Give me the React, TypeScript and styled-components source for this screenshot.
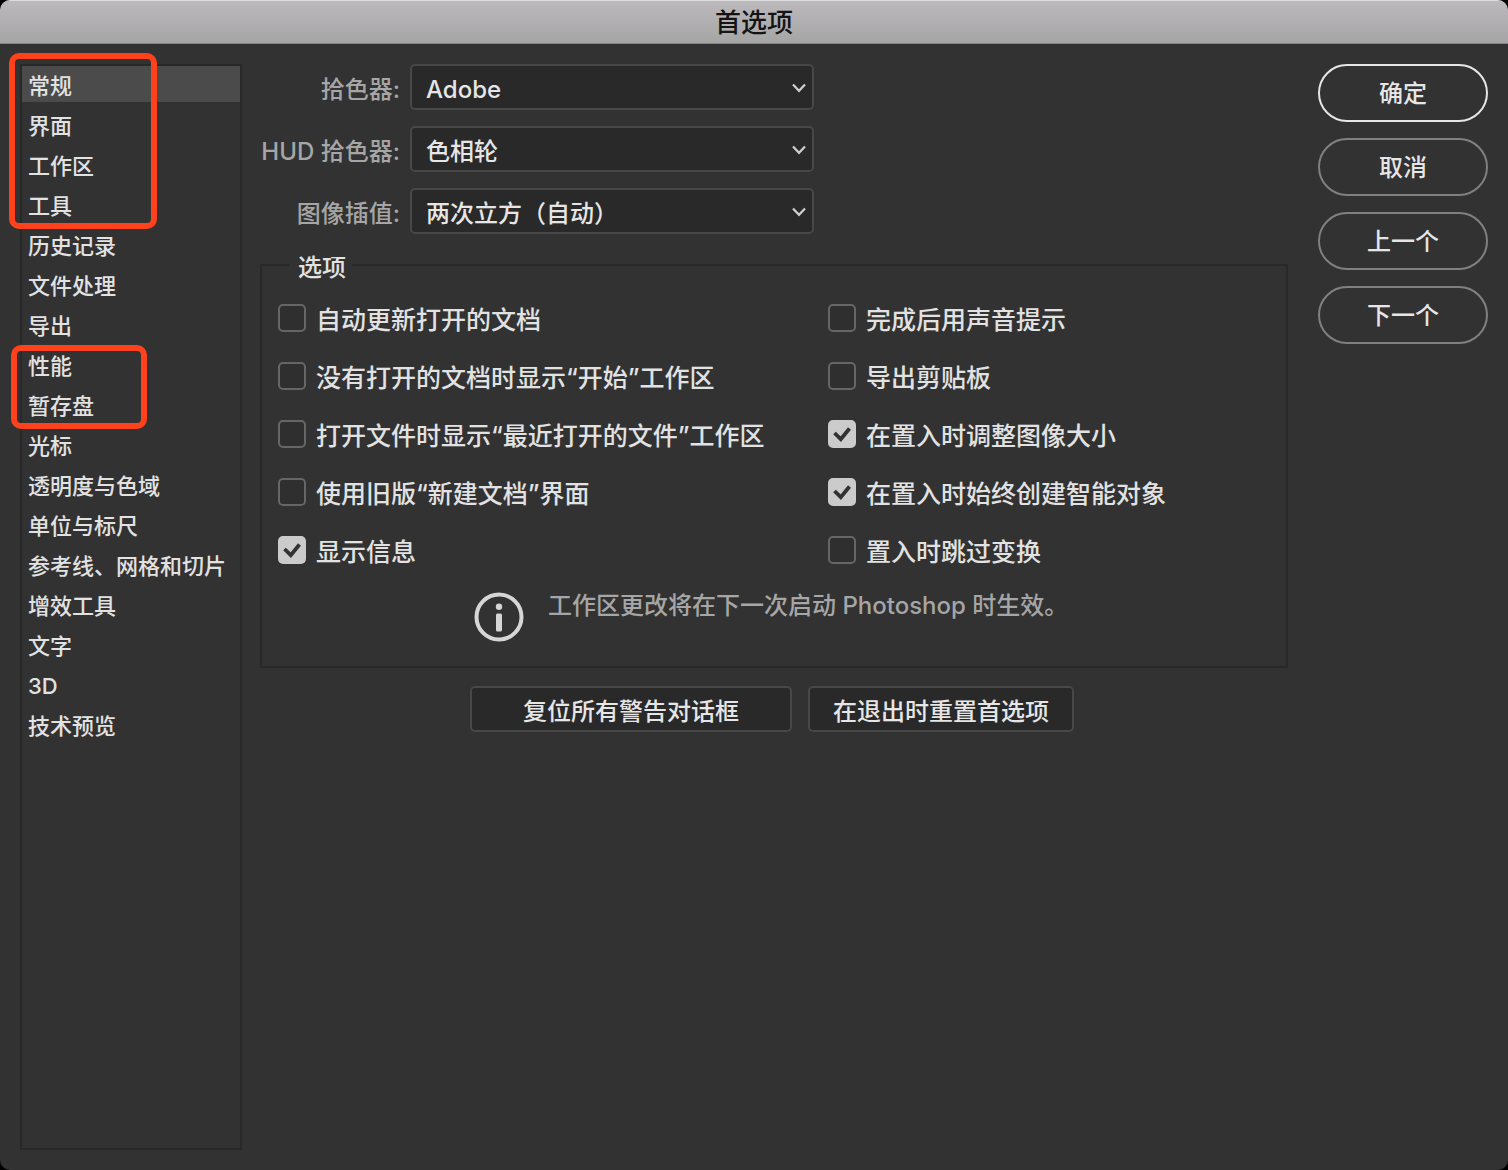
import React, { useId, useState } from "react";
import styled, { createGlobalStyle } from "styled-components";

const GlobalStyle = createGlobalStyle`
  *, *::before, *::after { box-sizing: border-box; }
  body { margin: 0; background: #000; }
  body, button, select, input {
    font-family: Inter, "Noto Sans CJK SC", sans-serif;
    font-weight: 500;
  }
`;

const Dialog = styled.div`
  min-height: 100vh;
  display: flex;
  flex-direction: column;
  border-radius: 10px;
  overflow: hidden;
  background: #323232;
  color: #e2e2e2;
  font-size: 24px;
  line-height: 30px;
`;

const TitleBar = styled.header`
  height: 44px;
  padding-top: 2px;
  display: flex;
  align-items: center;
  justify-content: center;
  background: linear-gradient(#bbb9bc, #a6a5a6);
  border-top: 1px solid #dddcde;
  border-bottom: 1px solid #858585;
`;

const Title = styled.h1`
  margin: 0;
  font-size: 26px;
  font-weight: 500;
  line-height: 30px;
  color: #141414;
`;

const Body = styled.div`
  flex: 1;
  display: grid;
  grid-template-columns: 222px minmax(0, 1fr) 170px;
  padding: 20px;
`;

const Sidebar = styled.nav`
  position: relative;
  border: 2px solid #282828;
`;

const CategoryList = styled.ul`
  margin: 0;
  padding: 0;
  list-style: none;
  display: flex;
  flex-direction: column;
  gap: 4px;
`;

const Category = styled.button<{ $active: boolean }>`
  display: block;
  width: 100%;
  height: 36px;
  padding: 4px 0 0 6px;
  border: 0;
  background: ${(p) => (p.$active ? "#4b4b4b" : "transparent")};
  color: inherit;
  font-size: 22px;
  line-height: 32px;
  text-align: left;
  white-space: nowrap;
`;

const Marker = styled.div<{ $top: number; $left: number; $width: number; $height: number }>`
  position: absolute;
  top: ${(p) => p.$top}px;
  left: ${(p) => p.$left}px;
  width: ${(p) => p.$width}px;
  height: ${(p) => p.$height}px;
  border: 6px solid #ff421c;
  border-radius: 10px;
  pointer-events: none;
`;

const Main = styled.main`
  margin: 0 30px 0 18px;
  display: flex;
  flex-direction: column;
  gap: 16px;
`;

const Fields = styled.div`
  display: grid;
  grid-template-columns: 140px minmax(0, 404px);
  gap: 16px 10px;
  align-items: center;
`;

const FieldLabel = styled.label`
  padding-top: 6px;
  color: #a6a6a6;
  text-align: right;
  white-space: nowrap;
`;

const SelectBox = styled.div`
  display: grid;
  align-items: center;
  > * { grid-area: 1 / 1; }
  > svg { justify-self: end; margin-right: 7px; pointer-events: none; }
`;

const Select = styled.select`
  appearance: none;
  width: 100%;
  height: 46px;
  padding: 4px 30px 0 14px;
  border: 2px solid #484848;
  border-radius: 5px;
  background: #292929;
  color: #e6e6e6;
  font-size: 24px;
`;

const Group = styled.fieldset`
  min-width: 0;
  margin: 0;
  padding: 24px 18px 24px 16px;
  border: 2px solid #282828;
  border-radius: 2px;
`;

const Legend = styled.legend`
  height: 30px;
  margin-left: 11px;
  padding: 4px 6px 0 9px;
  line-height: 28px;
`;

const Options = styled.div`
  display: grid;
  grid-template-columns: 5fr 4fr;
`;

const OptionColumn = styled.div`
  display: flex;
  flex-direction: column;
  gap: 30px;
`;

const Option = styled.label`
  height: 28px;
  display: flex;
  align-items: center;
  gap: 10px;
  white-space: nowrap;
`;

const OptionText = styled.span`
  padding-top: 4px;
  font-size: 25px;
`;

const TickBox = styled.span`
  display: grid;
  place-items: center;
  > * { grid-area: 1 / 1; }
  > svg { pointer-events: none; }
`;

const Tick = styled.input`
  appearance: none;
  width: 28px;
  height: 28px;
  margin: 0;
  border: 2px solid #666;
  border-radius: 5px;
  background: #2f2f2f;
  &:checked { background: #cbcbcb; border-color: #cbcbcb; }
`;

const Notice = styled.div`
  display: flex;
  gap: 24px;
  padding: 28px 0 0 196px;
  color: #a6a6a6;
`;

const NoticeText = styled.p`
  margin: 0;
  line-height: 28px;
  white-space: nowrap;
`;

const Actions = styled.div`
  display: flex;
  gap: 16px;
  margin-top: 2px;
  padding-left: 210px;
`;

const ActionButton = styled.button<{ $wide?: boolean }>`
  width: ${(p) => (p.$wide ? 322 : 266)}px;
  height: 46px;
  padding: 6px 0 0;
  border: 2px solid #484848;
  border-radius: 5px;
  background: #292929;
  color: #e6e6e6;
  font-size: 24px;
  line-height: 30px;
`;

const Commands = styled.div`
  display: flex;
  flex-direction: column;
  gap: 16px;
`;

const PillButton = styled.button<{ $primary?: boolean }>`
  height: 58px;
  padding: 2px 0 0;
  border: 2px solid ${(p) => (p.$primary ? "#e6e6e6" : "#808080")};
  border-radius: 29px;
  background: transparent;
  color: #e6e6e6;
  font-size: 24px;
  line-height: 30px;
`;

const categories = [
  "常规", "界面", "工作区", "工具", "历史记录", "文件处理", "导出", "性能", "暂存盘",
  "光标", "透明度与色域", "单位与标尺", "参考线、网格和切片", "增效工具", "文字", "3D", "技术预览",
];

const fields = [
  { label: "拾色器:", value: "Adobe" },
  { label: "HUD 拾色器:", value: "色相轮" },
  { label: "图像插值:", value: "两次立方（自动）" },
];

const optionColumns = [
  [
    { text: "自动更新打开的文档", on: false },
    { text: "没有打开的文档时显示“开始”工作区", on: false },
    { text: "打开文件时显示“最近打开的文件”工作区", on: false },
    { text: "使用旧版“新建文档”界面", on: false },
    { text: "显示信息", on: true },
  ],
  [
    { text: "完成后用声音提示", on: false },
    { text: "导出剪贴板", on: false },
    { text: "在置入时调整图像大小", on: true },
    { text: "在置入时始终创建智能对象", on: true },
    { text: "置入时跳过变换", on: false },
  ],
];

function SelectField({ label, value }: { label: string; value: string }) {
  const id = useId();
  return (
    <>
      <FieldLabel htmlFor={id}>{label}</FieldLabel>
      <SelectBox>
        <Select id={id} defaultValue={value}>
          <option>{value}</option>
        </Select>
        <svg width="16" height="12" viewBox="0 0 16 12" fill="none" aria-hidden="true">
          <path d="M2 3.5 8 9.8 14 3.5" stroke="#cfcfcf" strokeWidth="2.2" />
        </svg>
      </SelectBox>
    </>
  );
}

function TickOption({ text, on }: { text: string; on: boolean }) {
  const [checked, setChecked] = useState(on);
  return (
    <Option>
      <TickBox>
        <Tick type="checkbox" checked={checked} onChange={(e) => setChecked(e.target.checked)} />
        {checked && (
          <svg width="28" height="28" viewBox="0 0 28 28" fill="none" aria-hidden="true">
            <path d="M6.5 13 12.8 19.2 21.5 8.5" stroke="#323232" strokeWidth="3.8" />
          </svg>
        )}
      </TickBox>
      <OptionText>{text}</OptionText>
    </Option>
  );
}

export default function App() {
  const [active, setActive] = useState("常规");
  return (
    <>
      <GlobalStyle />
      <Dialog>
        <TitleBar>
          <Title>首选项</Title>
        </TitleBar>
        <Body>
          <Sidebar>
            <CategoryList>
              {categories.map((name) => (
                <li key={name}>
                  <Category type="button" $active={name === active} onClick={() => setActive(name)}>
                    {name}
                  </Category>
                </li>
              ))}
            </CategoryList>
            <Marker $top={-13} $left={-13} $width={148} $height={176} />
            <Marker $top={279} $left={-11} $width={136} $height={84} />
          </Sidebar>
          <Main>
            <Fields>
              {fields.map((f) => (
                <SelectField key={f.label} {...f} />
              ))}
            </Fields>
            <Group>
              <Legend>选项</Legend>
              <Options>
                {optionColumns.map((column, i) => (
                  <OptionColumn key={i}>
                    {column.map((o) => (
                      <TickOption key={o.text} {...o} />
                    ))}
                  </OptionColumn>
                ))}
              </Options>
              <Notice>
                <svg width="50" height="50" viewBox="0 0 50 50" fill="none" aria-hidden="true">
                  <circle cx="25" cy="25" r="22.5" stroke="#d6d6d6" strokeWidth="4" />
                  <circle cx="25" cy="14.8" r="3.2" fill="#d6d6d6" />
                  <rect x="22" y="21.5" width="6" height="18" rx="1.5" fill="#d6d6d6" />
                </svg>
                <NoticeText>工作区更改将在下一次启动 Photoshop 时生效。</NoticeText>
              </Notice>
            </Group>
            <Actions>
              <ActionButton type="button" $wide>复位所有警告对话框</ActionButton>
              <ActionButton type="button">在退出时重置首选项</ActionButton>
            </Actions>
          </Main>
          <Commands>
            <PillButton type="button" $primary>确定</PillButton>
            <PillButton type="button">取消</PillButton>
            <PillButton type="button">上一个</PillButton>
            <PillButton type="button">下一个</PillButton>
          </Commands>
        </Body>
      </Dialog>
    </>
  );
}
